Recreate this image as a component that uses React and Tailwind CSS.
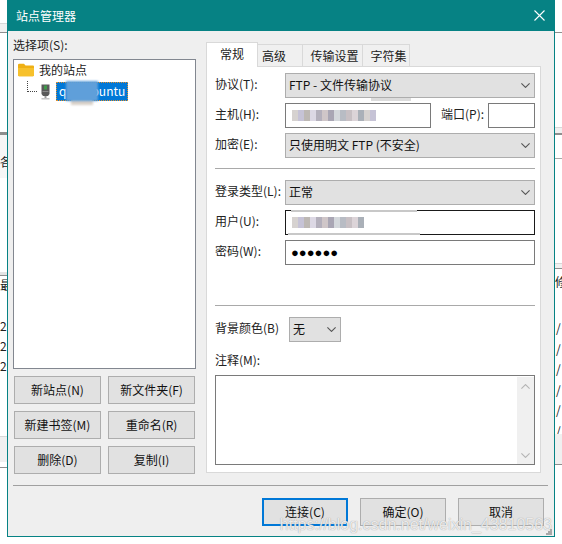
import React from "react";

const font = "font-['Noto_Sans_CJK_SC','Liberation_Sans',sans-serif]";

function Chevron({ className = "", color = "#555" }) {
  return (
    <svg width="9" height="5" viewBox="0 0 9 5" className={className} fill="none" stroke={color} strokeWidth="1.1">
      <path d="M0.4 0.4 L4.5 4.4 L8.6 0.4" />
    </svg>
  );
}

function Select({ children, w = "w-[250px]" }) {
  return (
    <div className={`${w} h-[25px] bg-[#e1e1e1] border border-[#adadad] flex items-center justify-between pl-[3px] pr-[4px] text-[12px] text-[#111]`}>
      <span className="pb-[2px]">{children}</span>
      <Chevron />
    </div>
  );
}

function Row({ label, children, className = "" }) {
  return (
    <div className={`flex items-center h-[25px] ${className}`}>
      <span className="w-[70px] pb-[4px] text-[12px] text-[#222] whitespace-nowrap">{label}</span>
      {children}
    </div>
  );
}

function Btn({ children, focus = false, w = "w-[87px]" }) {
  return (
    <div className={`${w} h-[28px] flex items-center justify-center pb-px text-[12px] text-[#111] bg-[#e1e1e1] ${focus ? "border-2 border-[#0078d7]" : "border border-[#adadad]"}`}>
      {children}
    </div>
  );
}

const pixels = ["#d6d2d0", "#c6c3d6", "#bdb8b4", "#dcd8e4", "#b4b0bc", "#cfc6c8", "#a9a6b4", "#d4d8dc", "#b8bcc4", "#c8c0c4", "#dcd4d8", "#aab0b8"];

function Blur({ cells }) {
  return (
    <div className="flex h-[11px] blur-[0.6px]">
      {Array.from({ length: cells }).map((_, i) => (
        <span key={i} className="w-[6px] h-full" style={{ background: pixels[i % pixels.length] }} />
      ))}
    </div>
  );
}

function Tab({ children, active = false, w, className = "" }) {
  return (
    <div className={`${w} ${className} flex items-center justify-center text-[12px] text-[#222] border-t border-x border-[#d9d9d9] ${active ? "h-[25px] bg-white relative z-10 -mb-px pb-[2px]" : "h-[22px] bg-[#f0f0f0] -ml-px"}`}>
      {children}
    </div>
  );
}

function Background() {
  const rowText = "h-[20px] text-[12px] leading-[20px] text-[#222]";
  return (
    <div className="h-[544px] w-[562px] bg-white flex justify-between">
      <div className="w-[7px] flex flex-col">
        <div className="h-[23px]" />
        <div className="h-[9px] bg-[#f0f0f0] border-t border-[#d8d8d8]" />
        <div className="h-px bg-[#8e8e8e]" />
        <div className="h-[99px]" />
        <div className="h-[3px] bg-[#8e8e8e]" />
        <div className="h-[43px] bg-[#f6f6f6] pt-[20px] text-[12px] leading-[14px] text-[#222]">各</div>
        <div className="h-[94px]" />
        <div className="h-[3px] bg-[#e4e4e4]" />
        <div className="h-px bg-[#8e8e8e]" />
        <div className="h-[18px] text-[12px] leading-[18px] text-[#222]">最</div>
        <div className="h-[22px]" />
        <div className={rowText}>20</div>
        <div className={rowText}>20</div>
        <div className={rowText}>20</div>
        <div className="h-[60px]" />
        <div className="h-[26px] bg-[#f0f0f0] border-t border-[#d8d8d8]" />
        <div className="h-[5px]" />
        <div className="h-px bg-[#8e8e8e]" />
      </div>
      <div className="w-[7px] flex flex-col">
        <div className="h-[32px]" />
        <div className="h-px bg-[#8e8e8e]" />
        <div className="h-[94px]" />
        <div className="h-[6px] bg-[#f0f0f0] border-t border-[#d8d8d8]" />
        <div className="h-[2px] bg-[#8e8e8e]" />
        <div className="h-[23px]" />
        <div className="h-px bg-[#a8a8a8]" />
        <div className="h-[104px]" />
        <div className="h-[5px] bg-[#f0f0f0] border-t border-[#d8d8d8]" />
        <div className="h-px bg-[#8e8e8e]" />
        <div className="h-[49px] pt-[6px] text-[12px] leading-[14px] text-[#222]">修</div>
        {["/", "/", "/", "/", "/", "/"].map((s, i) => (
          <div key={i} className="h-[20.5px] pl-px text-[12px] leading-[20px] text-[#222]">{s}</div>
        ))}
        <div className="h-[30px] bg-[#f0f0f0] -mt-[7px]" />
        <div className="h-px bg-[#8e8e8e]" />
      </div>
    </div>
  );
}

export default function App() {
  return (
    <div className={`relative w-[562px] h-[544px] overflow-hidden ${font}`}>
      <Background />
      {/* dialog window */}
      <div className="absolute left-[7px] top-0 w-[548px] h-[537px] bg-[#efefef] border-x border-b border-[#068284] flex flex-col">
        <div className="h-[31px] shrink-0 bg-[#068284] flex items-center justify-between pl-[8px] pr-[9px] text-white text-[12px]">
          <span>站点管理器</span>
          <svg width="11" height="11" viewBox="0 0 11 11" stroke="#fff" strokeWidth="1.1" fill="none">
            <path d="M0.5 0.5 L10.5 10.5 M10.5 0.5 L0.5 10.5" />
          </svg>
        </div>

        <div className="flex h-[454px] shrink-0">
          {/* left column */}
          <div className="w-[198px] shrink-0 pl-[5px] pt-[7px] flex flex-col">
            <div className="text-[12px] text-[#222] leading-[14px]">选择项(S):</div>
            <div className="mt-[7px] w-[183px] h-[310px] shrink-0 bg-white border border-[#828790] pl-[4px] pt-px">
              <div className="flex items-center gap-[5px] h-[18px]">
                <svg width="16" height="14" viewBox="0 0 16 14">
                  <path d="M0 2 Q0 0.8 1.2 0.8 H6 L7.5 2.6 H15 Q16 2.6 16 3.6 V12 Q16 13.2 14.8 13.2 H1.2 Q0 13.2 0 12 Z" fill="#efb014" />
                  <path d="M0 5 H16 V12 Q16 13.2 14.8 13.2 H1.2 Q0 13.2 0 12 Z" fill="#f7c12c" />
                </svg>
                <span className="text-[12px] text-[#222]">我的站点</span>
              </div>
              <div className="flex items-center h-[19px] mt-[3px] ml-[9px]">
                <div className="w-[10px] h-[11px] -mt-[11px] border-l border-b border-dotted border-[#444]" />
                <svg width="9" height="16" viewBox="0 0 9 16" className="ml-[4px] mr-[6px]">
                  <path d="M0.5 0.5 H8.5 V10 L7 12 H2 L0.5 10 Z" fill="#5a5a5a" />
                  <rect x="3" y="1.5" width="3" height="4" fill="#3f9a4a" />
                  <rect x="1.5" y="7" width="6" height="1" fill="#8a8a8a" />
                  <rect x="3.5" y="12" width="2" height="2" fill="#999" />
                  <rect x="0.5" y="14" width="8" height="1.5" fill="#c4c4c4" />
                </svg>
                <div className="relative h-[19px] w-[72px] bg-[#0078d7] border border-dotted border-[#e09030] text-white text-[12px] leading-[15px] pl-[2px] flex">
                  <span>q</span>
                  <span className="ml-[25px]">buntu</span>
                  <span className="absolute left-[14px] top-[16px] w-[22px] h-[6px] bg-[#d8d0c8] blur-[1px]" />
                  <span className="absolute left-[9px] -top-[2px] w-[32px] h-[20px] bg-[#5f9fda] blur-[1px]" />
                </div>
              </div>
            </div>
            <div className="mt-[7px] w-[183px] grid grid-cols-[87px_87px] gap-[7px] pl-px">
              <Btn>新站点(N)</Btn>
              <Btn>新文件夹(F)</Btn>
              <Btn>新建书签(M)</Btn>
              <Btn>重命名(R)</Btn>
              <Btn>删除(D)</Btn>
              <Btn>复制(I)</Btn>
            </div>
          </div>

          {/* right column */}
          <div className="flex-1 pt-[11px] flex flex-col">
            <div className="flex items-end h-[24px]">
              <Tab active w="w-[52px]">常规</Tab>
              <Tab w="w-[46px]" className="pr-[12px]">高级</Tab>
              <Tab w="w-[61px]" className="pl-[4px]">传输设置</Tab>
              <Tab w="w-[48px]" className="pl-[5px]">字符集</Tab>
            </div>
            <div className="w-[335px] h-[407px] bg-white border border-[#d9d9d9] pl-[8px] pr-[5px] pt-[6px] flex flex-col">
              <Row label="协议(T):"><Select>FTP - 文件传输协议</Select></Row>
              <Row label="主机(H):" className="mt-[5px]">
                <div className="relative w-[146px] h-[25px] bg-white border border-[#7a7a7a] flex items-center pl-[6px]">
                  <Blur cells={14} />
                  <span className="absolute left-[85px] -top-[6px] w-[40px] h-[3px] bg-[#dcdcdc] blur-[0.5px]" />
                </div>
                <span className="ml-[10px] w-[47px] pb-[4px] text-[12px] text-[#222] whitespace-nowrap">端口(P):</span>
                <div className="w-[47px] h-[25px] bg-white border border-[#7a7a7a]" />
              </Row>
              <Row label="加密(E):" className="mt-[5px]"><Select>只使用明文 FTP (不安全)</Select></Row>
              <div className="h-px bg-[#a9a9a9] mt-[10px] shrink-0" />
              <Row label="登录类型(L):" className="mt-[11px]"><Select>正常</Select></Row>
              <Row label="用户(U):" className="mt-[5px]">
                <div className="relative w-[250px] h-[25px] bg-white border border-[#1a1a1a] flex items-center pl-[6px]">
                  <Blur cells={12} />
                  <span className="absolute left-[5px] -top-px w-[126px] h-[2px] bg-[#c8c8c8]" />
                  <span className="absolute left-[2px] -bottom-px w-[132px] h-[2px] bg-[#c8c8c8]" />
                </div>
              </Row>
              <Row label="密码(W):" className="mt-[5px]">
                <div className="w-[250px] h-[25px] bg-white border border-[#7a7a7a] flex items-center pl-[5px] text-[13px] text-black font-['Liberation_Sans',sans-serif]">
                  ●●●●●●
                </div>
              </Row>
              <div className="h-px bg-[#a9a9a9] mt-[40px] shrink-0" />
              <Row label="背景颜色(B)" className="mt-[11px]">
                <div className="ml-[4px]">
                  <Select w="w-[52px]">无</Select>
                </div>
              </Row>
              <div className="text-[12px] text-[#222] leading-[14px] mt-[11px]">注释(M):</div>
              <div className="mt-[8px] w-[320px] h-[90px] bg-white border border-[#7a7a7a] flex justify-end">
                <div className="w-[17px] h-[87px] mt-px bg-[#f0f0f0] flex flex-col items-center justify-between pt-[7px] pb-[6px]">
                  <Chevron className="rotate-180" color="#b4b4b4" />
                  <Chevron color="#b4b4b4" />
                </div>
              </div>
            </div>
          </div>
        </div>

        <div className="h-px bg-[#a0a0a0] ml-[5px] mr-[6px] shrink-0 mb-[12px]" />
        <div className="flex justify-end gap-[12px] pr-[10px]">
          <Btn focus w="w-[86px]">连接(C)</Btn>
          <Btn w="w-[86px]">确定(O)</Btn>
          <Btn w="w-[86px]">取消</Btn>
        </div>
      </div>
      {/* watermark over the screenshot */}
      <div className="absolute right-[10px] top-[513px] text-[16px] leading-[24px] text-white/80 [text-shadow:0_0_1px_#888] font-['Liberation_Sans',sans-serif] whitespace-nowrap">
        https://blog.csdn.net/weixin_43810563
      </div>
      <svg width="6" height="6" viewBox="0 0 6 6" fill="#a8a8a8" className="absolute left-[546px] top-[529px]">
        <rect x="4" y="0" width="2" height="2" />
        <rect x="2" y="2" width="2" height="2" />
        <rect x="4" y="2" width="2" height="2" />
        <rect x="0" y="4" width="2" height="2" />
        <rect x="2" y="4" width="2" height="2" />
        <rect x="4" y="4" width="2" height="2" />
      </svg>
    </div>
  );
}
